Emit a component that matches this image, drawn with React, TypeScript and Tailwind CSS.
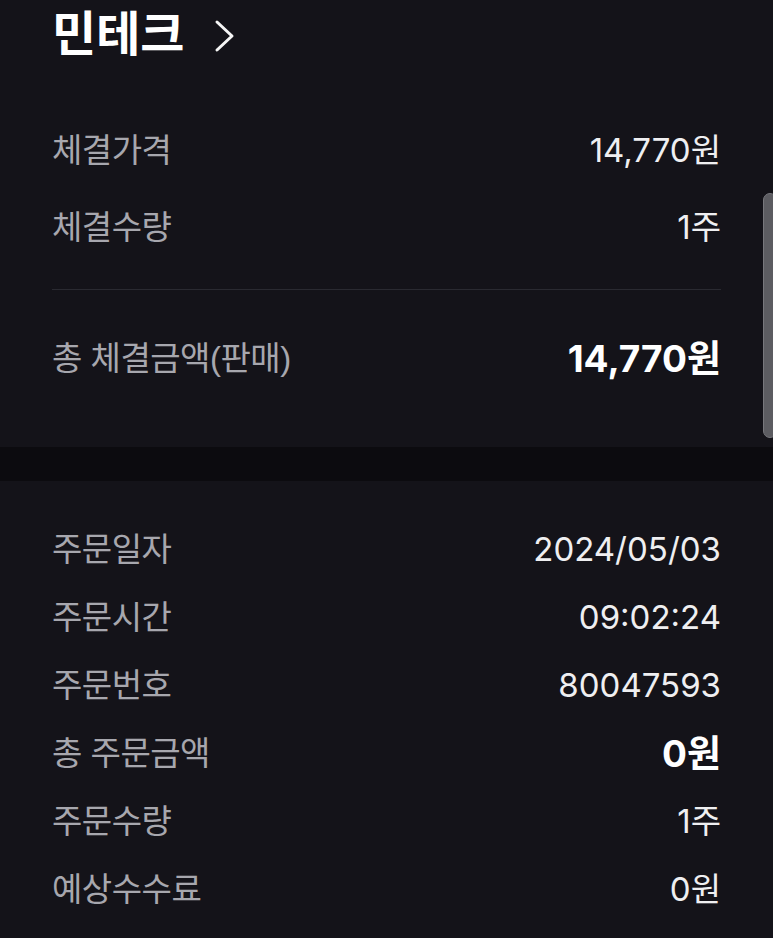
import React from "react";

const font = { fontFamily: '"Liberation Sans", "Noto Sans CJK KR", sans-serif' };
const num = { fontFamily: 'Inter, "Noto Sans CJK KR", sans-serif' };

function Row({ label, value, bold, h = "h-[68px]" }: { label: string; value: string; bold?: boolean; h?: string }) {
  return (
    <div className={`flex items-center justify-between ${h}`}>
      <span className="text-[33px] text-[#a7a7ae] tracking-[-0.5px]">{label}</span>
      <span style={num} className={bold ? "text-[37px] font-bold text-white" : "text-[33px] text-[#efeff1]"}>
        {value}
      </span>
    </div>
  );
}

export default function App() {
  return (
    <div className="relative w-[773px] h-[938px] overflow-hidden bg-[#141319]" style={font}>
      {/* top: execution summary */}
      <section className="px-[52px] pb-[58px]">
        <div className="flex items-center h-[70px] gap-[30px]">
          <h1 className="text-[48px] font-bold text-white leading-none">민테크</h1>
          <svg width="22" height="34" viewBox="0 0 22 34" fill="none" className="mt-[2px]">
            <path d="M3 3 L18 17 L3 31" stroke="#f5f5f5" strokeWidth="3" strokeLinecap="round" strokeLinejoin="round" />
          </svg>
        </div>
        <div className="pt-[42px]">
          <Row label="체결가격" value="14,770원" h="h-[77px]" />
          <Row label="체결수량" value="1주" h="h-[77px]" />
        </div>
        <div className="mt-[23px] h-px bg-[#2a2a31]" />
        <div className="pt-[39px]">
          <Row label="총 체결금액(판매)" value="14,770원" bold h="h-[60px]" />
        </div>
      </section>

      <div className="h-[34px] bg-[#0c0b0f]" />

      {/* bottom: order details */}
      <section className="px-[52px] pt-[35px]">
        <Row label="주문일자" value="2024/05/03" />
        <Row label="주문시간" value="09:02:24" />
        <Row label="주문번호" value="80047593" />
        <Row label="총 주문금액" value="0원" bold />
        <Row label="주문수량" value="1주" />
        <Row label="예상수수료" value="0원" />
      </section>

      {/* scrollbar thumb */}
      <div className="absolute left-[763px] top-[193px] w-[14px] h-[245px] rounded-[8px] bg-[#5c5c61] border border-[#77777c]" />
    </div>
  );
}
